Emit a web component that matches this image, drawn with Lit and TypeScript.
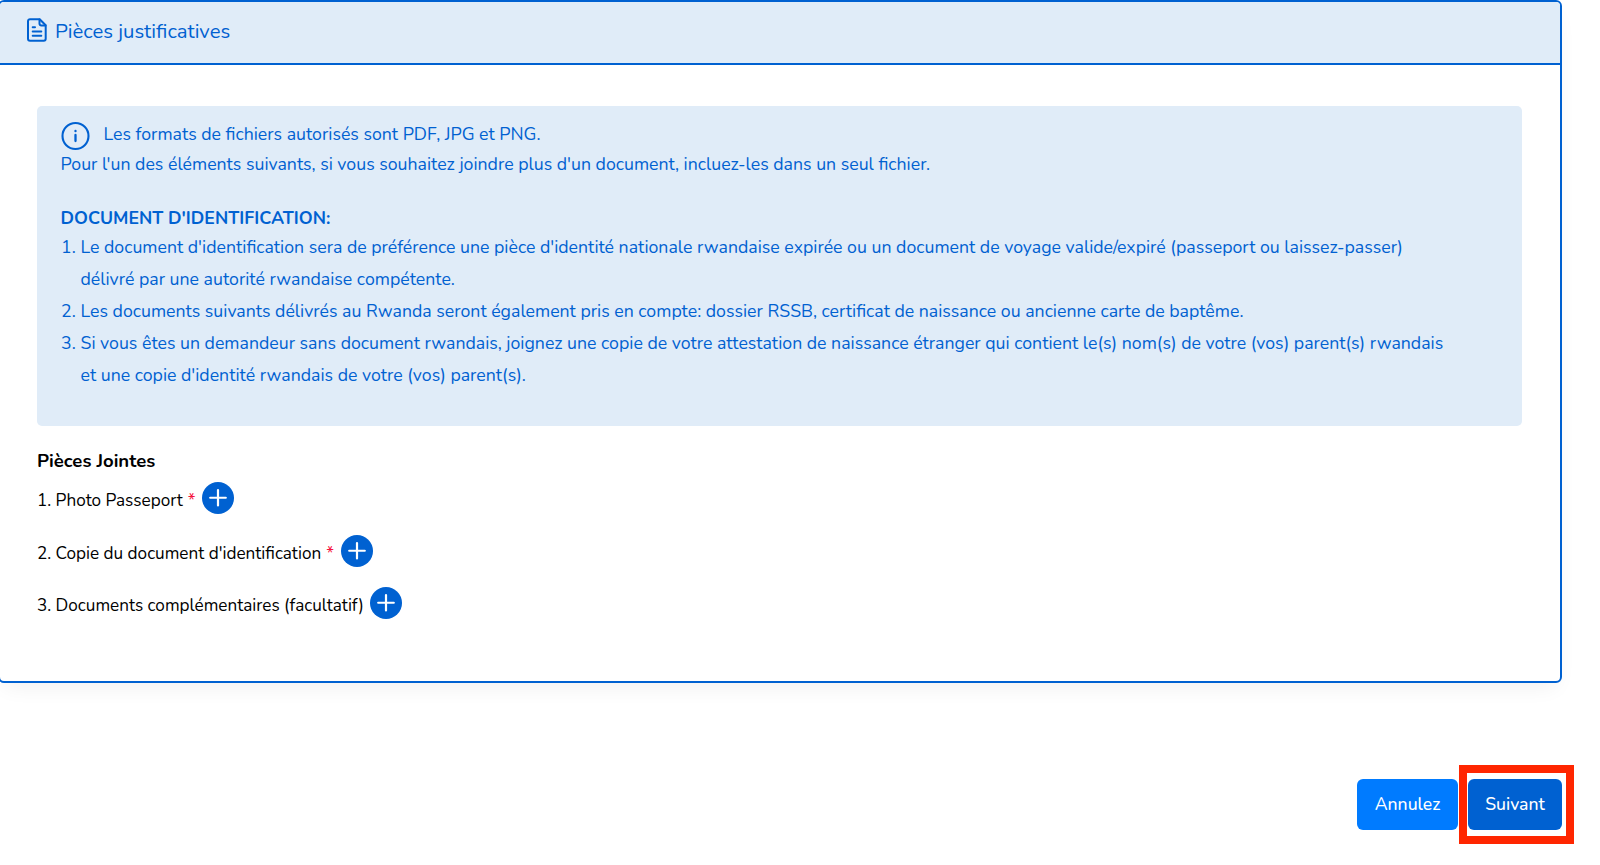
import {LitElement, css, html, nothing} from 'lit';
import {customElement, property} from 'lit/decorators.js';

@customElement('add-button')
export class AddButton extends LitElement {
  static styles = css`
    :host {
      display: block;
    }

    .add-button {
      display: block;
      margin: 0;
      padding: 0;
      border: none;
      width: 32px;
      height: 32px;
      border-radius: 50%;
      background: #0061d1;
      cursor: pointer;
    }

    .add-button__icon {
      display: block;
    }
  `;

  @property()
  label = '';

  render() {
    return html`<button class="add-button" aria-label=${this.label}>
      <svg class="add-button__icon" width="32" height="32" viewBox="0 0 32 32" fill="none" stroke="#fff" stroke-width="2.200" stroke-linecap="round">
        <path d="M16 8v15.500M8.200 15.750h15.600"/>
      </svg>
    </button>`;
  }
}

@customElement('app-root')
export class AppRoot extends LitElement {
  static styles = css`
    :host {
      display: block;
      height: 865px;
      overflow: hidden;
      background: #fff;
      color: #000;
      font-family: Nunito, Lato, sans-serif;
      font-size: 17.15px;
      line-height: 32px;
      white-space: nowrap;
    }

    .card {
      box-sizing: border-box;
      width: 1564px;
      height: 683px;
      margin-left: -2px;
      border: 2px solid #0061d1;
      border-radius: 6px;
      box-shadow: 0 10px 20px -6px rgba(0, 0, 0, .06);
    }

    .card__header {
      display: flex;
      align-items: center;
      box-sizing: border-box;
      height: 63px;
      padding-left: 27px;
      gap: 8px;
      border-bottom: 2px solid #0061d1;
      border-radius: 4px 4px 0 0;
      background: #e0ecf8;
      color: #0061d1;
      font-size: 20.3px;
    }

    .card__icon {
      margin-bottom: 5px;
    }

    .card__title {
      margin-bottom: 3px;
    }

    .card__body {
      padding: 41px 38px 0 37px;
    }

    .notice {
      box-sizing: border-box;
      height: 320px;
      padding: 12px 23px;
      border-radius: 5px;
      background: #e0ecf8;
      color: #0061d1;
      font-size: 17.73px;
    }

    .notice__lead {
      display: flex;
      align-items: center;
      gap: 12.5px;
      height: 32px;
      padding-left: 1px;
    }

    .notice__icon {
      margin-top: 4px;
    }

    .notice__text {
      line-height: 28px;
      padding-left: .5px;
    }

    .notice__title {
      margin-top: 24px;
      padding-left: .5px;
      font-weight: 700;
      line-height: 32px;
    }

    .notice__list {
      margin-top: -3px;
    }

    .notice__item {
      display: flex;
    }

    .notice__number {
      box-sizing: border-box;
      width: 20.5px;
      padding-left: 1px;
    }

    .section-title {
      margin-top: 19px;
      font-size: 18.5px;
      font-weight: 700;
    }

    .attachment {
      display: flex;
      height: 32px;
      margin-top: 5px;
      margin-bottom: 20.7px;
    }

    .attachment__label {
      padding: 3px 6px 0 0;
    }

    .attachment__required {
      padding: 0 1px 0 5px;
      color: #f5123d;
    }

    .actions {
      display: flex;
      justify-content: flex-end;
      align-items: center;
      gap: 1px;
      margin-top: 82px;
      padding-right: 26px;
    }

    .button {
      box-sizing: border-box;
      width: 101px;
      height: 51px;
      border: none;
      border-radius: 6px;
      padding: 0 0 1px;
      color: #fff;
      background: #007bff;
      font: inherit;
      font-size: 17.6px;
      font-weight: 500;
      cursor: pointer;
    }

    .button--primary {
      width: 94px;
      background: #0061d1;
    }

    .highlight {
      box-sizing: border-box;
      display: flex;
      width: 115px;
      height: 79px;
      padding: 6px 1px;
      border: 8px solid #ff2600;
    }
  `;

  attachments = [
    {label: '1. Photo Passeport', required: true},
    {label: "2. Copie du document d'identification", required: true},
    {label: '3. Documents complémentaires (facultatif)', required: false},
  ];

  rules = [
    ["Le document d'identification sera de préférence une pièce d'identité nationale rwandaise expirée ou un document de voyage valide/expiré (passeport ou laissez-passer)",
      'délivré par une autorité rwandaise compétente.'],
    ['Les documents suivants délivrés au Rwanda seront également pris en compte: dossier RSSB, certificat de naissance ou ancienne carte de baptême.'],
    ['Si vous êtes un demandeur sans document rwandais, joignez une copie de votre attestation de naissance étranger qui contient le(s) nom(s) de votre (vos) parent(s) rwandais',
      "et une copie d'identité rwandais de votre (vos) parent(s)."],
  ];

  render() {
    return html`
      <section class="card">
        <header class="card__header">
          <svg class="card__icon" width="20" height="24" viewBox="0 0 20 24" fill="none" stroke="#0061d1" stroke-width="2" stroke-linejoin="round" stroke-linecap="round">
            <path d="M3 1.200h9.700L18.700 7.200V20.800a2 2 0 0 1-2 2H3a2 2 0 0 1-2-2V3.200a2 2 0 0 1 2-2z"/>
            <path d="M12.500 1.500v4.200a1.800 1.800 0 0 0 1.800 1.800h4.200M5.700 9.200h2.300M5.700 13.500h8.600M5.700 17.800h8.600"/>
          </svg>
          <span class="card__title">Pièces justificatives</span>
        </header>
        <div class="card__body">
          <div class="notice">
            <div class="notice__lead">
              <svg class="notice__icon" width="30" height="30" viewBox="0 0 30 30" fill="none" stroke="#0061d1" stroke-width="2.100">
                <circle cx="14.500" cy="15" r="13"/>
                <path stroke-width="2.300" stroke-linecap="round" d="M14.500 14v6M14.500 10v.2"/>
              </svg>
              <span>Les formats de fichiers autorisés sont PDF, JPG et PNG.</span>
            </div>
            <div class="notice__text">Pour l'un des éléments suivants, si vous souhaitez joindre plus d'un document, incluez-les dans un seul fichier.</div>
            <div class="notice__title">DOCUMENT D'IDENTIFICATION:</div>
            <div class="notice__list">
              ${this.rules.map((lines, i) => html`
                <div class="notice__item">
                  <span class="notice__number">${i + 1}.</span>
                  <div>${lines.map((line) => html`<div>${line}</div>`)}</div>
                </div>`)}
            </div>
          </div>
          <div class="section-title">Pièces Jointes</div>
          ${this.attachments.map((item) => html`
            <div class="attachment">
              <span class="attachment__label">${item.label}${item.required ? html`<span class="attachment__required">*</span>` : nothing}</span>
              <add-button label=${item.label}></add-button>
            </div>`)}
        </div>
      </section>
      <div class="actions">
        <button class="button">Annulez</button>
        <div class="highlight"><button class="button button--primary">Suivant</button></div>
      </div>`;
  }
}
